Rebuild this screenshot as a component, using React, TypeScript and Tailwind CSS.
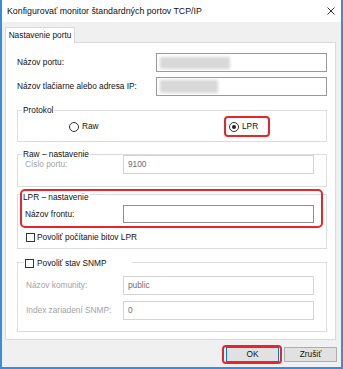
import React from "react";

const Radio = ({ checked }: { checked?: boolean }) => (
  <span className="w-[10px] h-[10px] rounded-full border border-[#333] bg-white flex items-center justify-center shrink-0">
    {checked && <span className="w-[4px] h-[4px] rounded-full bg-[#222]" />}
  </span>
);

const Checkbox = () => (
  <span className="w-[9px] h-[9px] border border-[#333] bg-white shrink-0" />
);

const Field = ({
  label,
  value,
  disabled,
  h = 19,
}: {
  label: string;
  value?: string;
  disabled?: boolean;
  h?: number;
}) => (
  <div className="flex items-center">
    <span className={`w-[98px] ${disabled ? "text-[#a3a3a3]" : ""}`}>{label}</span>
    <div
      className={`w-[191px] flex items-center pl-[4px] bg-white border ${
        disabled ? "border-[#d4d4d4] text-[#6e6e6e]" : "border-[#8f8f8f]"
      } ${h === 18 ? "h-[18px]" : "h-[19px]"}`}
    >
      {value}
    </div>
  </div>
);

export default function App() {
  return (
    <div className="w-[343px] h-[369px] flex flex-col bg-[#f0f0f0] border-x-2 border-b-2 border-[#3a8ddd] font-['Liberation_Sans',Arial,sans-serif] text-[8.3px] leading-none text-[#111] overflow-hidden">
      {/* title bar */}
      <div className="h-[22px] shrink-0 bg-white flex items-center pl-[5px] pr-[6px]">
        <span className="flex-1 text-[8.8px]">Konfigurovať monitor štandardných portov TCP/IP</span>
        <svg width="8" height="8" viewBox="0 0 8 8" className="block">
          <path d="M0.5 0.5 L7.5 7.5 M7.5 0.5 L0.5 7.5" stroke="#333" strokeWidth="1" fill="none" />
        </svg>
      </div>

      <div className="flex-1 flex flex-col pl-[3px] pt-[5px]">
        {/* tab */}
        <div className="flex">
          <div className="relative z-10 -mb-px h-[16px] w-[70px] bg-white border border-b-0 border-[#d9d9d9] flex items-center justify-center">
            Nastavenie portu
          </div>
        </div>

        {/* panel */}
        <div className="w-[331px] h-[298px] bg-white border border-[#d9d9d9] pt-[10px] pl-[11px] pr-[8px] flex flex-col">
          <div className="flex items-center h-[19px]">
            <span className="flex-1">Názov portu:</span>
            <div className="w-[171px] h-[19px] border border-[#999] flex items-center pl-[3px]">
              <div className="w-[70px] h-[12px] bg-[#d8d8d8] blur-[1.5px]" />
            </div>
          </div>
          <div className="flex items-center h-[19px] mt-[5px]">
            <span className="flex-1">Názov tlačiarne alebo adresa IP:</span>
            <div className="w-[171px] h-[19px] border border-[#999] flex items-center pl-[3px]">
              <div className="w-[58px] h-[13px] bg-[#d8d8d8] blur-[1.5px]" />
            </div>
          </div>

          {/* Protokol */}
          <div className="relative mt-[14px] h-[32px] border border-[#dcdcdc]">
            <span className="absolute left-[4px] -top-[7px] px-[1px] bg-white leading-[12px]">Protokol</span>
            <div className="flex items-center pt-[5px] pl-[51px]">
              <label className="w-[155px] flex items-center gap-[3px]">
                <Radio />
                <span>Raw</span>
              </label>
              <label className="w-[46px] h-[21px] border-2 border-[#e5272d] rounded-[4px] flex items-center gap-[3px] pl-[3px]">
                <Radio checked />
                <span>LPR</span>
              </label>
            </div>
          </div>

          {/* Raw */}
          <div className="relative mt-[12px] h-[33px] border border-[#dcdcdc] pl-[7px]">
            <span className="absolute left-[4px] -top-[7px] px-[1px] bg-white leading-[12px]">Raw – nastavenie</span>
            <Field label="Číslo portu:" value="9100" disabled />
          </div>

          {/* LPR */}
          <div className="relative mt-[7px] h-[55px] border border-[#dcdcdc] pl-[7px] pt-[10px]">
            <span className="absolute left-[4px] -top-[4px] px-[1px] bg-white leading-[12px]">LPR – nastavenie</span>
            <Field label="Názov frontu:" h={18} />
            <div className="flex items-center gap-[2px] mt-[9px] pl-[1px] h-[11px]">
              <Checkbox />
              <span>Povoliť počítanie bitov LPR</span>
            </div>
            <div className="absolute left-[2px] -top-[6px] w-[303px] h-[39px] border-2 border-[#e5272d] rounded-[5px]" />
          </div>

          {/* SNMP */}
          <div className="relative mt-[13px] h-[70px] border border-[#dcdcdc] pl-[8px] pt-[13px] flex flex-col gap-[6px]">
            <span className="absolute left-[6px] -top-[6px] w-[108px] h-[12px] px-[1px] bg-white flex items-center gap-[3px]">
              <Checkbox />
              <span>Povoliť stav SNMP</span>
            </span>
            <div className="flex items-center">
              <span className="w-[97px] text-[#a3a3a3]">Názov komunity:</span>
              <div className="w-[191px] h-[19px] flex items-center pl-[4px] bg-white border border-[#d4d4d4] text-[#6e6e6e]">public</div>
            </div>
            <div className="flex items-center">
              <span className="w-[97px] text-[#a3a3a3]">Index zariadení SNMP:</span>
              <div className="w-[191px] h-[19px] flex items-center pl-[4px] bg-white border border-[#d4d4d4] text-[#6e6e6e]">0</div>
            </div>
          </div>
        </div>

        {/* buttons */}
        <div className="flex justify-end items-center gap-[2px] pr-[4px] mt-[5px]">
          <div className="w-[60px] h-[19px] border-2 border-[#e5272d] rounded-[4px] flex items-center pl-[2px]">
            <button className="w-[53px] h-[15px] bg-[#e1e1e1] border border-[#0078d7] flex items-center justify-center">OK</button>
          </div>
          <button className="w-[53px] h-[15px] bg-[#e1e1e1] border border-[#adadad] flex items-center justify-center">Zrušiť</button>
        </div>
      </div>
    </div>
  );
}
